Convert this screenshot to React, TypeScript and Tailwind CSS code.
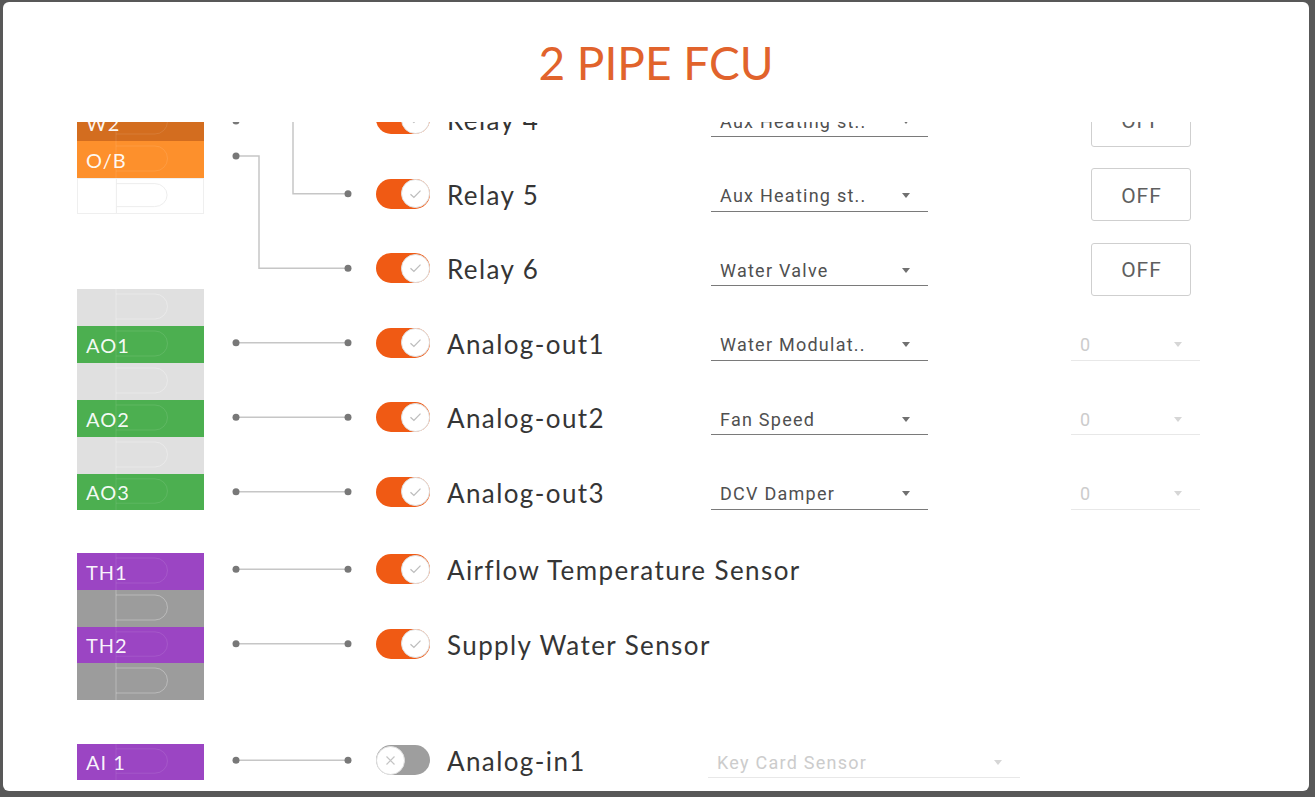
// 2 PIPE FCU — terminal-to-output mapping panel. Wires on the left, toggles + function selects on the right.
import clsx from "clsx";

type Extra = "off" | "zero" | null;

type Row = {
  label: string;
  on: boolean;
  select?: string;
  extra: Extra;
  gap?: string;
  wide?: boolean;
};

const rows: Row[] = [
  { label: "Relay 4", on: true, select: "Aux Heating st..", extra: "off" },
  { label: "Relay 5", on: true, select: "Aux Heating st..", extra: "off" },
  { label: "Relay 6", on: true, select: "Water Valve", extra: "off" },
  { label: "Analog-out1", on: true, select: "Water Modulat..", extra: "zero" },
  { label: "Analog-out2", on: true, select: "Fan Speed", extra: "zero" },
  { label: "Analog-out3", on: true, select: "DCV Damper", extra: "zero" },
  { label: "Airflow Temperature Sensor", on: true, extra: null, gap: "mt-[3px]" },
  { label: "Supply Water Sensor", on: true, extra: null },
  { label: "Analog-in1", on: false, select: "Key Card Sensor", extra: null, gap: "mt-[42px]", wide: true },
];

type Block =
  | { label?: string; bg: string; h: string; tone: "white" | "gray" | "color" }
  | { spacer: string };

const blocks: Block[] = [
  { label: "W2", bg: "bg-[#d36d1f]", h: "h-[37px]", tone: "color" },
  { label: "O/B", bg: "bg-[#fd902c]", h: "h-[37px]", tone: "color" },
  { bg: "bg-white", h: "h-[36px]", tone: "white" },
  { spacer: "h-[75px]" },
  { bg: "bg-[#e0e0e0]", h: "h-[37px]", tone: "gray" },
  { label: "AO1", bg: "bg-[#4caf50]", h: "h-[37px]", tone: "color" },
  { bg: "bg-[#e0e0e0]", h: "h-[37px]", tone: "gray" },
  { label: "AO2", bg: "bg-[#4caf50]", h: "h-[37px]", tone: "color" },
  { bg: "bg-[#e0e0e0]", h: "h-[37px]", tone: "gray" },
  { label: "AO3", bg: "bg-[#4caf50]", h: "h-[36px]", tone: "color" },
  { spacer: "h-[43px]" },
  { label: "TH1", bg: "bg-[#9b45c3]", h: "h-[37px]", tone: "color" },
  { bg: "bg-[#9c9c9c]", h: "h-[37px]", tone: "gray" },
  { label: "TH2", bg: "bg-[#9b45c3]", h: "h-[36px]", tone: "color" },
  { bg: "bg-[#9c9c9c]", h: "h-[37px]", tone: "gray" },
  { spacer: "h-[44px]" },
  { label: "AI 1", bg: "bg-[#9b45c3]", h: "h-[36px]", tone: "color" },
];

const outline = {
  white: "#ececec",
  gray: "rgba(255,255,255,0.3)",
  color: "rgba(255,255,255,0.1)",
};

// wires: [from y, to y, bend x] in wire-canvas coords
const wires: [number, number, number | null][] = [
  [39, 111.75, 89],
  [74, 186.25, 55],
  [260.75, 260.75, null],
  [335.25, 335.25, null],
  [409.75, 409.75, null],
  [487.25, 487.25, null],
  [561.75, 561.75, null],
  [678.25, 678.25, null],
];

function Terminal({ b }: { b: Block }) {
  if ("spacer" in b) return <div className={b.spacer} />;
  return (
    <div
      className={clsx(
        "relative flex items-center pl-[9px] font-['Lato',sans-serif] text-[20px] tracking-[1px] text-white/95",
        b.bg,
        b.h,
        b.tone === "white" && "border border-[#efefef]"
      )}
    >
      <svg className="absolute inset-0 h-full w-full" viewBox="0 0 127 37" preserveAspectRatio="none">
        <g fill="none" stroke={outline[b.tone]} strokeWidth="1">
          <path d="M39 0V37" />
          <path d="M39 5H78a12.5 12.5 0 0 1 0 25H39" />
        </g>
      </svg>
      {b.label && <span className="relative">{b.label}</span>}
    </div>
  );
}

function Toggle({ on }: { on: boolean }) {
  return (
    <div
      className={clsx(
        "flex h-[30px] w-[54px] shrink-0 items-center rounded-full",
        on ? "justify-end bg-[#f05a14]" : "justify-start bg-[#9e9e9e]"
      )}
    >
      <div className="flex h-[29px] w-[29px] items-center justify-center rounded-full border border-[#e0e0e0] bg-white">
        {on ? (
          <svg width="13" height="10" viewBox="0 0 13 10">
            <path d="M1.5 5.2l3.4 3.2L11.5 1.6" fill="none" stroke="#bdbdbd" strokeWidth="1.3" />
          </svg>
        ) : (
          <svg width="11" height="11" viewBox="0 0 11 11">
            <path d="M1.5 1.5l8 8M9.5 1.5l-8 8" fill="none" stroke="#c4c4c4" strokeWidth="1.2" />
          </svg>
        )}
      </div>
    </div>
  );
}

function Select({ value, disabled, className }: { value: string; disabled?: boolean; className: string }) {
  return (
    <div
      className={clsx(
        "flex h-[36px] shrink-0 items-center justify-between pl-[9px] pr-[18px] pt-[5px] font-['Roboto',sans-serif] text-[18px] tracking-[1.25px]",
        disabled ? "border-b-[1.5px] border-[#e8e8e8] text-[#cccccc]" : "border-b-[1.5px] border-[#7a7a7a] text-[#505050]",
        className
      )}
    >
      <span className="whitespace-nowrap">{value}</span>
      <span
        className={clsx(
          "h-0 w-0 shrink-0 border-x-[4.5px] border-t-[5px] border-x-transparent",
          disabled ? "border-t-[#d6d6d6]" : "border-t-[#707070]"
        )}
      />
    </div>
  );
}

function OutputRow({ r }: { r: Row }) {
  return (
    <div className={clsx("flex h-[74.5px] items-center", r.gap)}>
      <Toggle on={r.on} />
      <div className="ml-[17px] w-[264px] shrink-0 whitespace-nowrap pt-[3px] font-['Lato',sans-serif] text-[26px] tracking-[1.4px] text-[#353535]">
        {r.label}
      </div>
      {r.select &&
        (r.wide ? (
          <Select value={r.select} disabled className="-ml-[3px] w-[312px]" />
        ) : (
          <Select value={r.select} className="w-[217px]" />
        ))}
      {r.extra === "off" && (
        <button className="ml-[163px] mt-[2px] flex h-[53px] w-[100px] shrink-0 items-center justify-center rounded-[3px] border-[1.5px] border-[#cfcfcf] pl-[1px] pt-[3px] font-['Roboto',sans-serif] text-[21px] tracking-[1px] text-[#5f5f5f]">
          OFF
        </button>
      )}
      {r.extra === "zero" && <Select value="0" disabled className="ml-[143px] w-[129px]" />}
    </div>
  );
}

export default function App() {
  return (
    <div className="flex h-[797px] w-[1315px] bg-[#585858] pb-[6px] pl-[3px] pr-[6px] pt-[2px]">
      <div className="flex flex-1 flex-col overflow-hidden rounded-[6px] bg-white">
        <div className="flex h-[120px] shrink-0 items-center justify-center font-['Lato',sans-serif] text-[46px] text-[#e1632c]">
          2 PIPE FCU
        </div>
        <div className="flex-1 overflow-hidden">
          <div className="-mt-[40px] flex pl-[74px]">
            <div className="flex w-[127px] shrink-0 flex-col pt-[22px]">
              {blocks.map((b, i) => (
                <Terminal key={i} b={b} />
              ))}
            </div>
            <svg width="172" height="700" className="shrink-0">
              {wires.map(([a, b, bend], i) => (
                <g key={i}>
                  <path
                    d={bend === null ? `M32 ${a}H144` : `M32 ${a}H${bend}V${b}H144`}
                    fill="none"
                    stroke="#c6c6c6"
                    strokeWidth="1.5"
                  />
                  <circle cx="32" cy={a} r="3.5" fill="#787878" />
                  <circle cx="144" cy={b} r="3.5" fill="#787878" />
                </g>
              ))}
            </svg>
            <div className="flex flex-col">
              {rows.map((r) => (
                <OutputRow key={r.label} r={r} />
              ))}
            </div>
          </div>
        </div>
      </div>
    </div>
  );
}
